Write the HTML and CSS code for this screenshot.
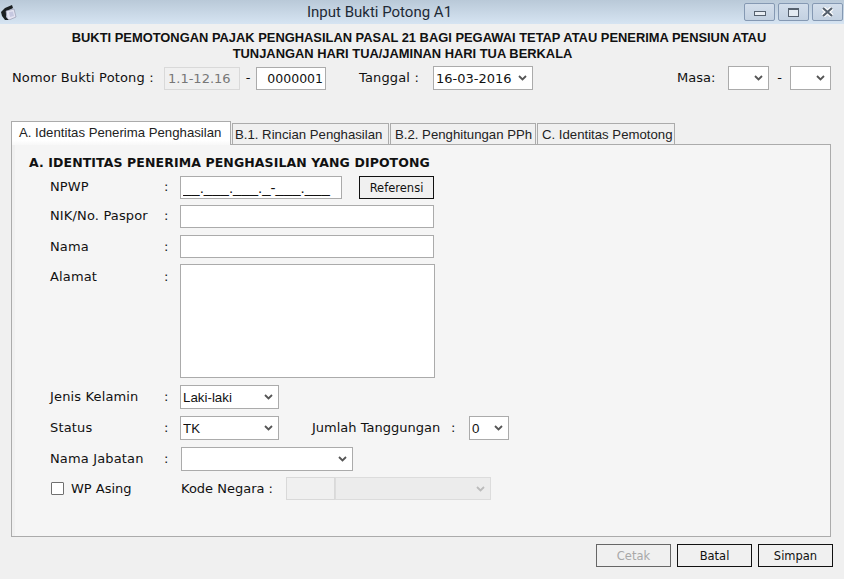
FILE: index.html
```html
<!DOCTYPE html>
<html lang="id">
<head>
<meta charset="utf-8">
<title>Input Bukti Potong A1</title>
<link rel="stylesheet" href="styles.css">
</head>
<body>
<div class="window">
  <header class="titlebar">
    <svg class="app-icon" width="16" height="18" viewBox="0 0 16 18">
      <path d="M0 10 L4 6 L11 3 L12 6 L6 9 L5 15 L9 18 L4 18 L1 14 Z" fill="#1c2022"/>
      <path d="M5 9 L13 7 L15 15 L8 18 L6 16 Z" fill="#e4e4f2" stroke="#8f90a8" stroke-width=".6"/>
      <path d="M8 10 L12 9.5 L13 14 L9 15 Z" fill="#c6c8e0"/>
    </svg>
    <div class="title">Input Bukti Potong A1</div>
    <div class="win-buttons">
      <div class="win-btn"><span class="glyph-min"></span></div>
      <div class="win-btn"><span class="glyph-max"></span></div>
      <div class="win-btn">
        <svg width="13" height="10" viewBox="0 0 13 10"><path d="M2 1 L11 9 M11 1 L2 9" stroke="#fff" stroke-width="4.4"/><path d="M2 1 L11 9 M11 1 L2 9" stroke="#56616e" stroke-width="2.2"/></svg>
      </div>
    </div>
  </header>

  <h1 class="heading">
    <span class="heading-line">BUKTI PEMOTONGAN PAJAK PENGHASILAN PASAL 21 BAGI PEGAWAI TETAP ATAU PENERIMA PENSIUN ATAU</span>
    <span class="heading-line second">TUNJANGAN HARI TUA/JAMINAN HARI TUA BERKALA</span>
  </h1>

  <div class="meta-row">
    <span class="meta-label">Nomor Bukti Potong :</span>
    <input class="input w-prefix" value="1.1-12.16" disabled>
    <span class="dash-a">-</span>
    <input class="input w-number" value="0000001">
    <span class="meta-date">Tanggal :</span>
    <select class="select w-date"><option>16-03-2016</option></select>
    <span class="meta-masa">Masa:</span>
    <select class="select w-masa"><option></option></select>
    <span class="dash-b">-</span>
    <select class="select w-masa"><option></option></select>
  </div>

  <nav class="tabs">
    <div class="tab active">A. Identitas Penerima Penghasilan</div>
    <div class="tab t2">B.1. Rincian Penghasilan</div>
    <div class="tab t3">B.2. Penghitungan PPh</div>
    <div class="tab t4">C. Identitas Pemotong</div>
  </nav>

  <section class="panel">
    <h2 class="section-title">A. IDENTITAS PENERIMA PENGHASILAN YANG DIPOTONG</h2>

    <div class="row r-npwp">
      <label class="label">NPWP</label><span class="colon">:</span>
      <input class="input w-npwp" value="__.___.___._-___.___">
      <button class="btn w-ref">Referensi</button>
    </div>
    <div class="row r-nik">
      <label class="label">NIK/No. Paspor</label><span class="colon">:</span>
      <input class="input w-long">
    </div>
    <div class="row r-nama">
      <label class="label">Nama</label><span class="colon">:</span>
      <input class="input w-long">
    </div>
    <div class="row r-alamat">
      <label class="label">Alamat</label><span class="colon">:</span>
      <textarea class="input textarea"></textarea>
    </div>
    <div class="row r-select">
      <label class="label">Jenis Kelamin</label><span class="colon">:</span>
      <select class="select w-gender arial"><option>Laki-laki</option></select>
    </div>
    <div class="row r-select">
      <label class="label">Status</label><span class="colon">:</span>
      <select class="select w-gender arial"><option>TK</option></select>
      <span class="tanggungan">Jumlah Tanggungan</span>
      <span class="colon2">:</span>
      <select class="select w-zero arial"><option>0</option></select>
    </div>
    <div class="row r-select">
      <label class="label">Nama Jabatan</label><span class="colon">:</span>
      <select class="select w-jabatan"><option></option></select>
    </div>
    <div class="row r-wp">
      <span class="check"></span>
      <label class="wp-label">WP Asing</label>
      <span class="kode-label">Kode Negara :</span>
      <input class="input w-kode" disabled>
      <select class="select w-negara" disabled><option></option></select>
    </div>
  </section>

  <footer class="actions">
    <button class="btn w-action muted">Cetak</button>
    <button class="btn w-action">Batal</button>
    <button class="btn w-action">Simpan</button>
  </footer>
</div>
</body>
</html>
```
FILE: styles.css
```css
* { box-sizing: border-box; }
html, body { margin: 0; padding: 0; }
body {
  width: 844px;
  height: 579px;
  overflow: hidden;
  background: #f0f0f0;
  color: #111;
  font-family: "DejaVu Sans", Verdana, sans-serif;
  font-size: 13px;
}
.window { display: flex; flex-direction: column; height: 579px; }

.titlebar {
  height: 24px;
  display: flex;
  align-items: flex-start;
  position: relative;
  background: linear-gradient(#b9c9d8, #d6e4f2);
  padding-left: 1px;
}
.app-icon { margin-top: 2px; }
.title {
  position: absolute;
  left: 307px;
  top: 3px;
  font-family: Roboto, "Liberation Sans", sans-serif;
  font-size: 15px;
  color: #1e2a36;
}
.win-buttons { margin-left: auto; margin-right: 1px; margin-top: 3px; display: flex; gap: 3px; }
.win-btn {
  width: 31px;
  height: 18px;
  border: 1px solid #8599b3;
  border-radius: 2px;
  background: linear-gradient(#d3deeb, #c3d1e1);
  display: flex;
  align-items: center;
  justify-content: center;
}
.glyph-min { width: 12px; height: 5px; margin-top: 3px; background: #e8edf3; border: 1px solid #56616e; }
.glyph-max { width: 11px; height: 9px; border: 1px solid #56616e; border-top-width: 2px; background: #e4ebf2; }

.heading {
  margin: 6px 0 0;
  font-family: "Liberation Sans", Arial, sans-serif;
  font-weight: bold;
  font-size: 12.9px;
  line-height: 16px;
  color: #111;
  display: flex;
  flex-direction: column;
  align-items: center;
}
.heading-line { margin-right: 6px; }
.heading-line.second { margin-right: 39px; }

.meta-row {
  display: flex;
  align-items: center;
  height: 24px;
  margin-top: 4px;
  padding-left: 12px;
}
.meta-label { width: 152px; margin-top: -2px; letter-spacing: .15px; }
.dash-a { width: 16px; text-align: center; margin-top: -2px; }
.meta-date { margin-left: 33px; width: 74px; margin-top: -2px; letter-spacing: .15px; }
.meta-masa { margin-left: 144px; width: 51px; margin-top: -2px; }
.dash-b { width: 21px; text-align: center; margin-top: -2px; }

.input, .select {
  height: 23px;
  border: 1px solid #ababab;
  background-color: #fff;
  color: #111;
  font-family: "DejaVu Sans", Verdana, sans-serif;
  font-size: 13px;
  border-radius: 0;
  outline: none;
  margin: 0;
  padding: 0 3px;
}
.input:disabled { background: #f0f0f0; border-color: #d9d9d9; color: #777; -webkit-text-fill-color: #777; opacity: 1; }
.select {
  appearance: none;
  -webkit-appearance: none;
  height: 24px;
  padding: 0 14px 0 2px;
  background-image: url("data:image/svg+xml,%3Csvg xmlns='http://www.w3.org/2000/svg' width='9' height='6'%3E%3Cpath d='M1 1 L4.5 4.5 L8 1' fill='none' stroke='%23555' stroke-width='1.8'/%3E%3C/svg%3E");
  background-repeat: no-repeat;
  background-position: right 5px center;
  opacity: 1;
}
.select:disabled {
  background-color: #ececec;
  border-color: #dcdcdc;
  background-image: url("data:image/svg+xml,%3Csvg xmlns='http://www.w3.org/2000/svg' width='9' height='6'%3E%3Cpath d='M1 1 L4.5 4.5 L8 1' fill='none' stroke='%23bbb' stroke-width='1.8'/%3E%3C/svg%3E");
}
.arial { font-family: "Liberation Sans", Arial, sans-serif; font-size: 13.33px; }

.w-prefix { width: 76px; padding: 0 3px; }
.w-number { width: 70px; text-align: right; padding-right: 2px; font-size: 12.5px; }
.w-date { width: 100px; padding-left: 2px; }
.w-masa { width: 41px; }

.tabs {
  display: flex;
  align-items: flex-end;
  height: 24px;
  margin-top: 30px;
  padding-left: 11px;
  font-family: "Liberation Sans", Arial, sans-serif;
  font-size: 13.2px;
  position: relative;
  z-index: 1;
}
.tab {
  height: 21px;
  background: #f0f0f0;
  border: 1px solid #ababab;
  border-bottom: 0;
  padding: 3px 0 0 2px;
  white-space: nowrap;
  color: #222;
  margin-left: 1px;
}
.tab.active {
  height: 24px;
  width: 220px;
  margin-left: 0;
  background: linear-gradient(#fff, #fff 80%, #f8f8f8);
  padding: 3px 0 0 7px;
  margin-bottom: -1px;
}
.tab.t2 { width: 157px; }
.tab.t3 { width: 146px; padding-left: 4px; }
.tab.t4 { width: 138px; padding-left: 4px; }

.panel {
  margin: 0 13px 0 11px;
  height: 393px;
  background: #f5f5f5;
  border: 1px solid #ababab;
  padding: 10px 0 0 38px;
  box-shadow: inset 3px 0 0 #f0f0f0;
}
.section-title {
  margin: 0 0 0 -21px;
  font-family: "DejaVu Sans", Verdana, sans-serif;
  font-weight: bold;
  font-size: 12.5px;
  letter-spacing: .1px;
  line-height: 16px;
  height: 21px;
  color: #111;
}
.row { display: flex; align-items: center; }
.label { width: 114px; padding-bottom: 2px; letter-spacing: .15px; }
.colon { width: 16px; padding-bottom: 2px; }
.r-npwp { height: 23px; margin-bottom: 6px; }
.r-nik { height: 23px; margin-bottom: 7px; }
.r-nama { height: 23px; margin-bottom: 6px; }
.r-nama .label, .r-nama .colon { padding-bottom: 0; }
.r-alamat { height: 114px; margin-bottom: 7px; align-items: flex-start; }
.r-alamat .label, .r-alamat .colon { margin-top: 5px; }
.r-select { height: 24px; margin-bottom: 7px; }
.r-wp { height: 23px; margin-top: -1px; }

.w-npwp { width: 162px; padding: 0 2px; font-family: "Liberation Sans", Arial, sans-serif; font-size: 15px; }
.w-long { width: 254px; }
.textarea { width: 255px; height: 114px; resize: none; }
.w-gender { width: 99px; padding-left: 2px; }
.tanggungan { margin-left: 33px; width: 139px; padding-bottom: 2px; }
.colon2 { width: 18px; padding-bottom: 2px; }
.w-zero { width: 40px; padding-left: 2px; }
.w-jabatan { width: 172px; margin-left: 1px; }
.check { width: 13px; height: 13px; margin-left: 1px; border: 1px solid #707070; background: #fff; border-radius: 1px; }
.wp-label { width: 110px; margin-left: 7px; }
.kode-label { width: 105px; }
.w-kode { width: 49px; height: 23px; }
.w-negara { width: 156px; height: 23px; }

.btn {
  height: 23px;
  border: 1px solid #111;
  background: #f0f0f0;
  color: #111;
  font-family: "DejaVu Sans", Verdana, sans-serif;
  font-size: 11.5px;
  padding: 0;
  border-radius: 0;
}
.w-ref { width: 75px; margin-left: 17px; }
.actions {
  display: flex;
  justify-content: flex-end;
  gap: 6px;
  margin-top: 7px;
  padding-right: 11px;
}
.w-action { width: 75px; }
.muted { color: #a8a8a8; border-color: #666; }
```
